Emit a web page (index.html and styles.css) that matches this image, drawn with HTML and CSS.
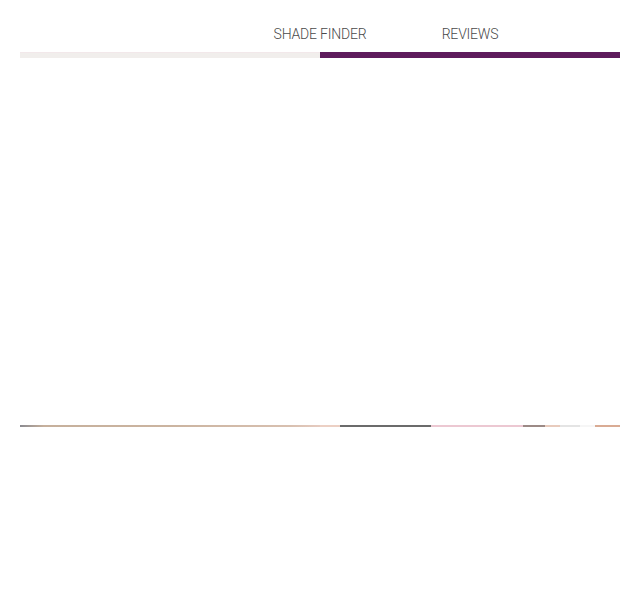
FILE: index.html
```html
<!DOCTYPE html>
<html>
<head>
<meta charset="utf-8">
<link rel="stylesheet" href="styles.css">
</head>
<body>
<div class="page">
  <nav class="tabs">
    <div class="tab">SHADE FINDER</div>
    <div class="tab">REVIEWS</div>
  </nav>
  <div class="indicator">
    <div class="ind-rest"></div>
    <div class="ind-active"></div>
  </div>
  <div class="stage"></div>
  <div class="shades">
    <div class="sh sh1"></div>
    <div class="sh sh2"></div>
    <div class="sh sh3"></div>
    <div class="sh sh4"></div>
    <div class="sh sh5"></div>
    <div class="sh sh6"></div>
    <div class="sh sh7"></div>
    <div class="sh sh8"></div>
    <div class="sh sh9"></div>
  </div>
</div>
</body>
</html>
```
FILE: styles.css
```css
html, body { margin: 0; padding: 0; background: #fff; }
.page { padding: 0 20px; }
.tabs {
  display: flex;
  height: 52px;
  align-items: center;
  padding-top: 15px;
  box-sizing: border-box;
  padding-left: 225px;
}
.tab {
  width: 150px;
  text-align: center;
  font-family: Roboto, "Liberation Sans", sans-serif;
  font-weight: 300;
  font-size: 14px;
  color: #4a4a4a;
  letter-spacing: -0.2px;
}
.indicator { display: flex; height: 6px; }
.ind-rest { flex: 1; background: #f1eeec; border-top: 1px solid #f2e8ea; box-sizing: border-box; }
.ind-active { flex: 1; background: #5e1b5c; }
.stage { height: 367px; }
.shades { display: flex; height: 2px; }
.sh { height: 2px; }
.sh1 { width: 300px; background: linear-gradient(to right, #8a8a90, #c6b09c 8%, #cbb4a0 50%, #d8c0b0 90%, #e6cbc0); }
.sh2 { width: 20px; background: #ecd0c4; }
.sh3 { width: 91px; background: #6b6b6b; }
.sh4 { width: 92px; background: #ecc8d2; }
.sh5 { width: 22px; background: #9c8a86; }
.sh6 { width: 15px; background: #e8cbbd; }
.sh7 { width: 20px; background: #e4e4e4; }
.sh8 { width: 15px; background: #f6f6f6; }
.sh9 { width: 25px; background: #d9ab94; }
```
